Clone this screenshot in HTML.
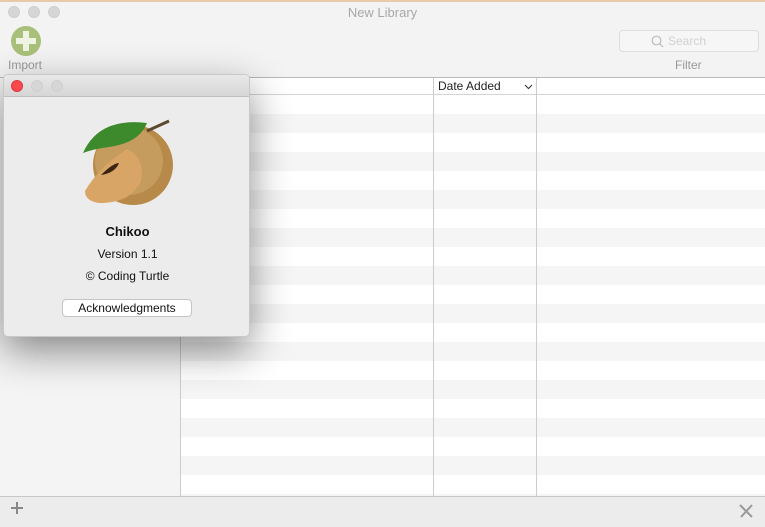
<!DOCTYPE html>
<html><head><meta charset="utf-8"><style>
*{margin:0;padding:0;box-sizing:border-box}
body{width:765px;height:527px;overflow:hidden;background:#ececec;font-family:"Liberation Sans",sans-serif;position:relative}
.abs{position:absolute}
.dot{position:absolute;width:12px;height:12px;border-radius:50%;background:#d6d6d6;border:1px solid #cfcfcf}
</style></head><body>
<div class="abs" style="left:0;top:0;width:765px;height:2px;background:#e8c9a8"></div>
<div class="abs" style="left:0;top:2px;width:765px;height:75px;background:#f3f3f3"></div>
<div class="dot" style="left:8px;top:6px"></div><div class="dot" style="left:28px;top:6px"></div><div class="dot" style="left:48px;top:6px"></div>
<div class="abs" style="left:0;top:5px;width:765px;text-align:center;font-size:13px;color:#a8a8a8">New Library</div>
<div class="abs" style="left:11px;top:26px;width:30px;height:30px;border-radius:50%;background:#a9c07a"></div>
<div class="abs" style="left:23px;top:31px;width:6px;height:20px;background:#eef3e2"></div>
<div class="abs" style="left:16px;top:38px;width:20px;height:6px;background:#eef3e2"></div>
<div class="abs" style="left:8px;top:58px;font-size:12px;color:#999">Import</div>
<div class="abs" style="left:619px;top:30px;width:140px;height:22px;border:1px solid #ddd;border-radius:4px;background:#f6f6f6"></div>
<svg class="abs" style="left:651px;top:35px" width="13" height="13"><circle cx="5.5" cy="5.5" r="4.3" fill="none" stroke="#bbb" stroke-width="1.2"/><line x1="8.6" y1="8.6" x2="12" y2="12" stroke="#bbb" stroke-width="1.2"/></svg>
<div class="abs" style="left:668px;top:34px;font-size:12px;color:#d0d0d0">Search</div>
<div class="abs" style="left:675px;top:58px;font-size:12px;color:#999">Filter</div>
<div class="abs" style="left:0;top:77px;width:765px;height:1px;background:#b8b8b8"></div>
<div class="abs" style="left:0;top:78px;width:180px;height:418px;background:#f4f4f4"></div>
<div class="abs" style="left:180px;top:78px;width:585px;height:418px;background:#fff;background-image:repeating-linear-gradient(to bottom,#fff 0 19px,#f5f5f5 19px 38px);background-position:0 17px"></div>
<div class="abs" style="left:180px;top:78px;width:585px;height:17px;background:#fff;border-bottom:1px solid #d4d4d4"></div>
<div class="abs" style="left:180px;top:78px;width:1px;height:418px;background:#ccc"></div>
<div class="abs" style="left:433px;top:78px;width:1px;height:418px;background:#ccc"></div>
<div class="abs" style="left:536px;top:78px;width:1px;height:418px;background:#ccc"></div>
<div class="abs" style="left:438px;top:79px;font-size:12px;color:#222">Date Added</div>
<svg class="abs" style="left:524px;top:84px" width="9" height="6"><path d="M1 1L4.5 4.5L8 1" fill="none" stroke="#444" stroke-width="1.2"/></svg>
<div class="abs" style="left:0;top:496px;width:765px;height:1px;background:#c8c8c8"></div>
<div class="abs" style="left:0;top:497px;width:765px;height:30px;background:#ececec"></div>
<div class="abs" style="left:11px;top:507px;width:12px;height:2px;background:#888"></div>
<div class="abs" style="left:16px;top:502px;width:2px;height:12px;background:#888"></div>
<svg class="abs" style="left:738px;top:503px" width="16" height="16"><path d="M2 2L14 14M14 2L3 14" stroke="#999" stroke-width="2"/></svg>
<!-- about window -->
<div class="abs" style="left:3px;top:74px;width:247px;height:263px;background:#ececec;border:1px solid #c9c9c9;border-radius:5px;box-shadow:0 14px 40px rgba(0,0,0,0.45);overflow:hidden">
 <div style="height:22px;background:linear-gradient(#e8e8e8,#d6d6d6);border-bottom:1px solid #c0c0c0"></div>
 <div class="dot" style="left:7px;top:5px;background:#fc4a4f;border-color:#e0373c"></div>
 <div class="dot" style="left:27px;top:5px"></div><div class="dot" style="left:47px;top:5px"></div>
 <svg class="abs" style="left:75px;top:42px" width="100" height="95">
  <circle cx="54" cy="48" r="40" fill="#b88a4a"/>
  <circle cx="50" cy="44" r="34" fill="#c9a063" opacity=".8"/>
  <path d="M6 74Q20 50 48 32Q66 40 62 64Q52 86 20 86Q6 84 6 74Z" fill="#d9a566"/>
  <path d="M22 58Q34 46 40 46Q36 56 22 58Z" fill="#3a2412"/>
  <path d="M4 36Q20 0 68 6Q60 26 30 30Q14 32 4 36Z" fill="#3d8a2c"/>
  <path d="M68 14L90 4" stroke="#5a4a30" stroke-width="3"/>
 </svg>
 <div class="abs" style="left:0;top:149px;width:247px;text-align:center;font-size:13px;font-weight:bold;color:#111">Chikoo</div>
 <div class="abs" style="left:0;top:172px;width:247px;text-align:center;font-size:12px;color:#111">Version 1.1</div>
 <div class="abs" style="left:0;top:194px;width:247px;text-align:center;font-size:12px;color:#111">© Coding Turtle</div>
 <div class="abs" style="left:58px;top:224px;width:130px;height:18px;background:#fff;border:1px solid #c4c4c4;border-radius:4px;text-align:center;font-size:12px;line-height:16px;color:#111">Acknowledgments</div>
</div>
</body></html>
